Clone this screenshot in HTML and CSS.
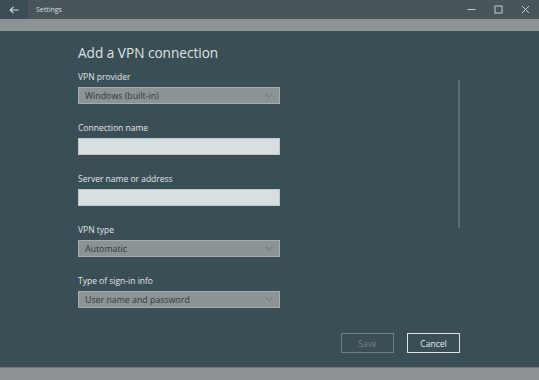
FILE: index.html
```html
<!DOCTYPE html>
<html>
<head>
<meta charset="utf-8">
<link rel="stylesheet" href="styles.css">
</head>
<body>
<div class="window">
  <div class="titlebar">
    <div class="back">
      <svg width="10" height="8" viewBox="0 0 10 8"><path d="M4.5 0.8 L1.2 4 L4.5 7.2 M1.2 4 H9.5" fill="none" stroke="#d9dfe1" stroke-width="1.1"/></svg>
    </div>
    <div class="apptitle">Settings</div>
    <div class="controls">
      <div class="ctl"><svg width="9" height="9" viewBox="0 0 9 9"><path d="M0.5 4.5 H8.5" stroke="#c7ccce" stroke-width="1"/></svg></div>
      <div class="ctl"><svg width="9" height="9" viewBox="0 0 9 9"><rect x="1" y="1" width="7" height="7" fill="none" stroke="#c7ccce" stroke-width="1"/></svg></div>
      <div class="ctl"><svg width="9" height="9" viewBox="0 0 9 9"><path d="M1 1 L8 8 M8 1 L1 8" stroke="#c7ccce" stroke-width="1"/></svg></div>
    </div>
  </div>
  <div class="band"></div>
  <div class="main">
    <div class="scrollbar"></div>
    <h1 class="title">Add a VPN connection</h1>
    <div class="field">
      <div class="label">VPN provider</div>
      <div class="select"><span>Windows (built-in)</span><svg class="chev" width="8" height="5" viewBox="0 0 8 5"><path d="M0.5 0.5 L4 4 L7.5 0.5" fill="none" stroke="#6d777b" stroke-width="1"/></svg></div>
    </div>
    <div class="field">
      <div class="label">Connection name</div>
      <div class="input"></div>
    </div>
    <div class="field">
      <div class="label">Server name or address</div>
      <div class="input"></div>
    </div>
    <div class="field">
      <div class="label">VPN type</div>
      <div class="select"><span>Automatic</span><svg class="chev" width="8" height="5" viewBox="0 0 8 5"><path d="M0.5 0.5 L4 4 L7.5 0.5" fill="none" stroke="#6d777b" stroke-width="1"/></svg></div>
    </div>
    <div class="field">
      <div class="label">Type of sign-in info</div>
      <div class="select"><span>User name and password</span><svg class="chev" width="8" height="5" viewBox="0 0 8 5"><path d="M0.5 0.5 L4 4 L7.5 0.5" fill="none" stroke="#6d777b" stroke-width="1"/></svg></div>
    </div>
    <div class="buttons">
      <div class="btn disabled">Save</div>
      <div class="btn">Cancel</div>
    </div>
  </div>
  <div class="band bottom"></div>
</div>
</body>
</html>
```

FILE: styles.css
```css
html, body {
  margin: 0;
  padding: 0;
  background: #3a4e56;
}
body {
  font-family: "Open Sans", "Noto Sans", sans-serif;
}
.window {
  width: 539px;
  height: 380px;
  display: flex;
  flex-direction: column;
  overflow: hidden;
}
.titlebar {
  height: 19px;
  display: flex;
  align-items: center;
  background: #49555a;
}
.back {
  width: 28px;
  height: 19px;
  background: #3c4d54;
  display: flex;
  align-items: center;
  justify-content: center;
}
.apptitle {
  margin-left: 8px;
  font-size: 7px;
  color: #d8dcde;
  flex: 1;
}
.controls {
  display: flex;
  height: 19px;
}
.ctl {
  width: 27px;
  display: flex;
  align-items: center;
  justify-content: center;
}
.band {
  height: 12px;
  background: #8d9295;
}
.band.bottom {
  height: 12px;
  border-top: 1px solid #6f777a;
}
.main {
  position: relative;
  flex: 1;
  padding: 12px 0 0 78px;
  box-sizing: border-box;
}
.scrollbar {
  position: absolute;
  left: 458px;
  top: 49px;
  width: 2px;
  height: 148px;
  background: #5c6f76;
}
.title {
  margin: 0 0 8px 0;
  font-size: 13.6px;
  line-height: 20px;
  font-weight: 400;
  color: #dfe3e4;
}
.field {
  width: 202px;
  margin-bottom: 18px;
}
.label {
  font-size: 8.5px;
  line-height: 12px;
  color: #e1e5e6;
  margin-bottom: 4px;
}
.select {
  height: 17px;
  box-sizing: border-box;
  border: 1px solid #a6acae;
  background: #8b9395;
  display: flex;
  align-items: center;
  justify-content: space-between;
  padding: 0 6px 0 6px;
  font-size: 8.8px;
  color: #2c3a40;
}
.input {
  height: 17px;
  box-sizing: border-box;
  border: 1px solid #bfc6c8;
  background: #d8dfe0;
}
.buttons {
  display: flex;
  justify-content: flex-end;
  gap: 13px;
  margin-top: 25px;
  padding-right: 79px;
}
.btn {
  width: 53px;
  height: 20px;
  box-sizing: border-box;
  border: 1px solid #dfe3e4;
  display: flex;
  align-items: center;
  justify-content: center;
  font-size: 8.5px;
  color: #e6eaeb;
}
.btn.disabled {
  border-color: #6e8086;
  color: #74858b;
}
```
